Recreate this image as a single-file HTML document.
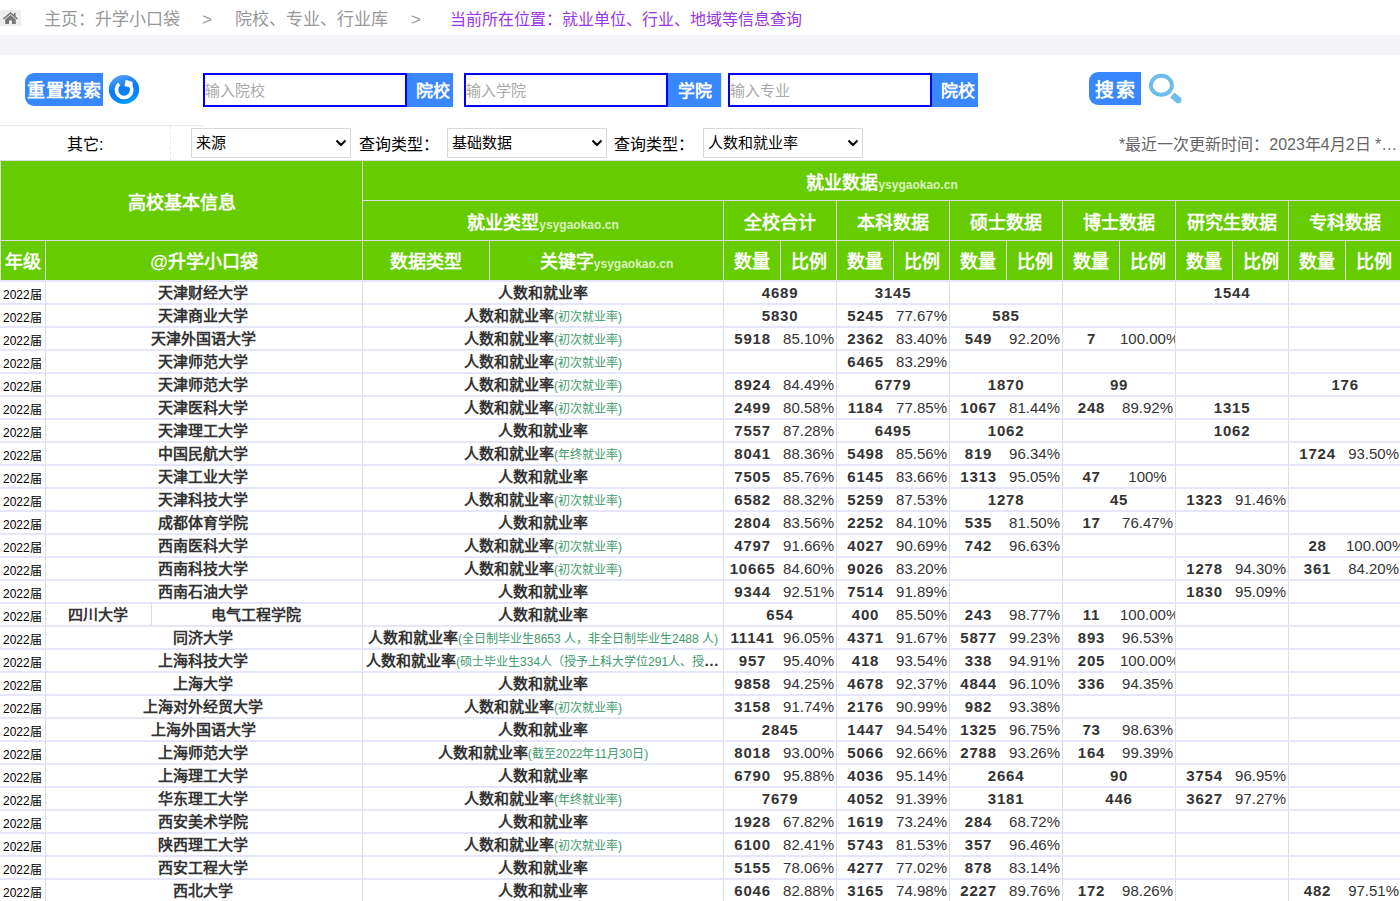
<!DOCTYPE html>
<html lang="zh-CN">
<head>
<meta charset="utf-8">
<title>就业单位、行业、地域等信息查询</title>
<style>
*{box-sizing:border-box;}
html,body{margin:0;padding:0;}
html{overflow:hidden;width:1400px;height:901px;}
body{width:1400px;height:901px;overflow:hidden;background:#fff;position:relative;
  font-family:"Liberation Sans",sans-serif;color:#333;}
.abs{position:absolute;}
/* breadcrumb */
.home{left:0;top:10px;width:21px;height:16px;background:#eee;}
.bc{top:7.5px;height:24px;line-height:24px;font-size:17px;color:#999;white-space:nowrap;}
.bc.cur{color:#9a36e8;font-size:16px;}
.band{left:0;top:35px;width:1400px;height:20px;background:#f4f4f8;}
/* search row */
.btn{background:#3987ff;color:#fff;font-weight:bold;text-align:center;white-space:nowrap;}
.inp{top:73px;height:34px;border:2px solid #0000f5;background:#fff;color:#a9a9a9;font-size:15px;line-height:32px;padding-left:0;white-space:nowrap;}
.ib{top:73px;height:34px;line-height:37px;font-size:17px;padding-left:6px;}
.sel{top:128px;height:30px;border:1px solid #d9d9d9;border-radius:0;background:#fff;font-size:15px;line-height:28px;color:#000;padding-left:4px;white-space:nowrap;}
.sel svg{position:absolute;right:3px;top:10px;}
.lab{top:129.5px;height:30px;line-height:30px;font-size:16px;color:#000;white-space:nowrap;}
/* table */
table{position:absolute;left:0;top:160px;width:1402px;border-collapse:separate;border-spacing:0;table-layout:fixed;
  border-top:1px solid #ddd;}
th{background:#66cc00;color:#fff;font-weight:bold;font-size:18px;text-align:center;padding:0;
  border-right:1px solid #ddd;border-bottom:1px solid #ddd;height:40px;white-space:nowrap;overflow:hidden;}
th small{font-size:12px;color:#d9f2bf;font-weight:bold;}
tr.h3 th{height:39px;border-bottom:0;padding-bottom:2px;}
th.f{border-left:1px solid #ddd;}
td{height:23px;padding:0;border-top:2px solid #e6e6fa;border-right:0;text-align:center;font-size:15px;
  white-space:nowrap;overflow:hidden;color:#333;line-height:14px;vertical-align:middle;}
td.yr{font-size:12px;color:#000;text-align:left;padding-left:3px;border-right:1px solid #dcdce6;padding-top:5px;}
td.nm{font-weight:bold;border-right:1px solid #dcdce6;padding-right:2px;}
td.ty{border-right:1px solid #dcdce6;font-weight:bold;}
td.ty div{overflow:hidden;text-overflow:ellipsis;white-space:nowrap;padding:0 3px;height:19px;line-height:19px;}
td.ty span{font-size:12px;font-weight:normal;color:#3c9a6b;}
td.n{font-weight:bold;letter-spacing:0.8px;}
td.p{font-weight:normal;}
td.e{border-right:1px solid #dcdce6;}
</style>
</head>
<body>
<!-- breadcrumb -->
<div class="abs home">
<svg width="21" height="16" viewBox="0 0 21 16"><path d="M10.5 2 L3 8.6 L4 9.6 L10.5 4 L17 9.6 L18 8.6 L15.6 6.4 V3 H13.8 V4.9 Z" fill="#777"/><path d="M5.2 9.4 L10.5 4.9 L15.8 9.4 V14 H12 V10.5 H9 V14 H5.2 Z" fill="#777"/></svg>
</div>
<div class="abs bc" style="left:44px;">主页：升学小口袋</div>
<div class="abs bc" style="left:202px;">&gt;</div>
<div class="abs bc" style="left:235px;">院校、专业、行业库</div>
<div class="abs bc" style="left:411px;">&gt;</div>
<div class="abs bc cur" style="left:450px;">当前所在位置：就业单位、行业、地域等信息查询</div>
<div class="abs band"></div>

<!-- search row -->
<div class="abs btn" style="left:25px;top:73px;width:78px;height:33px;line-height:36px;border-radius:9px 0 0 9px;font-family:'Liberation Serif',serif;font-size:18px;letter-spacing:0.5px;">重置搜索</div>
<svg class="abs" style="left:108px;top:74px;" width="32" height="32" viewBox="0 0 32 32">
  <defs><linearGradient id="g1" x1="0.25" y1="0" x2="0.6" y2="1"><stop offset="0" stop-color="#5aa2f2"/><stop offset="0.45" stop-color="#0b7bfb"/><stop offset="0.8" stop-color="#0586ff"/><stop offset="1" stop-color="#0aa6ff"/></linearGradient></defs>
  <ellipse cx="16" cy="15.5" rx="15.2" ry="14.6" fill="url(#g1)"/>
  <path d="M21.6 10.4 A7.7 7.7 0 1 1 11.2 9.9" fill="none" stroke="#fff" stroke-width="3.7"/>
  <path d="M17.9 6.3 L24.4 8.2 L24.2 10.8 L22.8 12.9 L16.9 12 Z" fill="#fff" stroke="#fff" stroke-width="0.7" stroke-linejoin="round"/>
</svg>
<div class="abs inp" style="left:203px;width:204px;">输入院校</div>
<div class="abs btn ib" style="left:407px;width:46px;">院校</div>
<div class="abs inp" style="left:464px;width:204px;">输入学院</div>
<div class="abs btn ib" style="left:668px;width:53px;padding-left:0;">学院</div>
<div class="abs" style="left:721px;top:73px;width:1px;height:34px;background:#e6e6fa;"></div>
<div class="abs inp" style="left:728px;width:204px;">输入专业</div>
<div class="abs btn ib" style="left:932px;width:46px;">院校</div>
<div class="abs btn" style="left:1089px;top:72px;width:52px;height:33px;line-height:37px;border-radius:9px 0 0 9px;font-family:'Liberation Serif',serif;font-size:19px;letter-spacing:2px;padding-left:2px;">搜索</div>
<svg class="abs" style="left:1146px;top:70px;" width="40" height="38" viewBox="0 0 40 38">
  <ellipse cx="15.4" cy="15.3" rx="10.5" ry="9.5" fill="none" stroke="#6cbdea" stroke-width="3.9"/>
  <path d="M26.4 25 L32.2 30" stroke="#6cbdea" stroke-width="6.6" stroke-linecap="butt"/>
  <circle cx="32.2" cy="30" r="3.3" fill="#6cbdea"/>
</svg>

<!-- filter row -->
<div class="abs" style="left:0;top:125px;width:203px;height:1px;background:#e8e8e8;"></div>
<div class="abs" style="left:170px;top:126px;width:0;height:34px;border-left:1px dashed #e6e6fa;"></div>
<div class="abs lab" style="left:67px;">其它:</div>
<div class="abs sel" style="left:191px;width:160px;">来源<svg width="12" height="8" viewBox="0 0 12 8"><path d="M1.5 1.5 L6 6 L10.5 1.5" fill="none" stroke="#000" stroke-width="2"/></svg></div>
<div class="abs lab" style="left:359px;">查询类型：</div>
<div class="abs sel" style="left:447px;width:160px;">基础数据<svg width="12" height="8" viewBox="0 0 12 8"><path d="M1.5 1.5 L6 6 L10.5 1.5" fill="none" stroke="#000" stroke-width="2"/></svg></div>
<div class="abs lab" style="left:614px;">查询类型：</div>
<div class="abs sel" style="left:703px;width:160px;">人数和就业率<svg width="12" height="8" viewBox="0 0 12 8"><path d="M1.5 1.5 L6 6 L10.5 1.5" fill="none" stroke="#000" stroke-width="2"/></svg></div>
<div class="abs lab" style="left:1119px;color:#666;">*最近一次更新时间：2023年4月2日 *…</div>

<!-- table -->
<table>
<colgroup>
<col style="width:46px"><col style="width:106px"><col style="width:211px"><col style="width:127px"><col style="width:234px">
<col style="width:57px"><col style="width:56px"><col style="width:57px"><col style="width:56px"><col style="width:57px"><col style="width:56px">
<col style="width:57px"><col style="width:56px"><col style="width:57px"><col style="width:56px"><col style="width:57px"><col style="width:56px">
</colgroup>
<thead>
<tr><th class="f" colspan="3" rowspan="2">高校基本信息</th><th colspan="14">就业数据<small>ysygaokao.cn</small></th></tr>
<tr><th colspan="2">就业类型<small>ysygaokao.cn</small></th><th colspan="2">全校合计</th><th colspan="2">本科数据</th><th colspan="2">硕士数据</th><th colspan="2">博士数据</th><th colspan="2">研究生数据</th><th colspan="2">专科数据</th></tr>
<tr class="h3"><th class="f">年级</th><th colspan="2">@升学小口袋</th><th>数据类型</th><th>关键字<small>ysygaokao.cn</small></th><th>数量</th><th>比例</th><th>数量</th><th>比例</th><th>数量</th><th>比例</th><th>数量</th><th>比例</th><th>数量</th><th>比例</th><th>数量</th><th>比例</th></tr>
</thead>
<tbody>
<tr><td class="yr">2022届</td><td class="nm" colspan="2">天津财经大学</td><td class="ty" colspan="2"><div>人数和就业率</div></td><td class="n e" colspan="2">4689</td><td class="n e" colspan="2">3145</td><td class="e" colspan="2"></td><td class="e" colspan="2"></td><td class="n e" colspan="2">1544</td><td class="e" colspan="2"></td></tr>
<tr><td class="yr">2022届</td><td class="nm" colspan="2">天津商业大学</td><td class="ty" colspan="2"><div>人数和就业率<span>(初次就业率)</span></div></td><td class="n e" colspan="2">5830</td><td class="n">5245</td><td class="p e">77.67%</td><td class="n e" colspan="2">585</td><td class="e" colspan="2"></td><td class="e" colspan="2"></td><td class="e" colspan="2"></td></tr>
<tr><td class="yr">2022届</td><td class="nm" colspan="2">天津外国语大学</td><td class="ty" colspan="2"><div>人数和就业率<span>(初次就业率)</span></div></td><td class="n">5918</td><td class="p e">85.10%</td><td class="n">2362</td><td class="p e">83.40%</td><td class="n">549</td><td class="p e">92.20%</td><td class="n">7</td><td class="p e">100.00%</td><td class="e" colspan="2"></td><td class="e" colspan="2"></td></tr>
<tr><td class="yr">2022届</td><td class="nm" colspan="2">天津师范大学</td><td class="ty" colspan="2"><div>人数和就业率<span>(初次就业率)</span></div></td><td class="e" colspan="2"></td><td class="n">6465</td><td class="p e">83.29%</td><td class="e" colspan="2"></td><td class="e" colspan="2"></td><td class="e" colspan="2"></td><td class="e" colspan="2"></td></tr>
<tr><td class="yr">2022届</td><td class="nm" colspan="2">天津师范大学</td><td class="ty" colspan="2"><div>人数和就业率<span>(初次就业率)</span></div></td><td class="n">8924</td><td class="p e">84.49%</td><td class="n e" colspan="2">6779</td><td class="n e" colspan="2">1870</td><td class="n e" colspan="2">99</td><td class="e" colspan="2"></td><td class="n e" colspan="2">176</td></tr>
<tr><td class="yr">2022届</td><td class="nm" colspan="2">天津医科大学</td><td class="ty" colspan="2"><div>人数和就业率<span>(初次就业率)</span></div></td><td class="n">2499</td><td class="p e">80.58%</td><td class="n">1184</td><td class="p e">77.85%</td><td class="n">1067</td><td class="p e">81.44%</td><td class="n">248</td><td class="p e">89.92%</td><td class="n e" colspan="2">1315</td><td class="e" colspan="2"></td></tr>
<tr><td class="yr">2022届</td><td class="nm" colspan="2">天津理工大学</td><td class="ty" colspan="2"><div>人数和就业率</div></td><td class="n">7557</td><td class="p e">87.28%</td><td class="n e" colspan="2">6495</td><td class="n e" colspan="2">1062</td><td class="e" colspan="2"></td><td class="n e" colspan="2">1062</td><td class="e" colspan="2"></td></tr>
<tr><td class="yr">2022届</td><td class="nm" colspan="2">中国民航大学</td><td class="ty" colspan="2"><div>人数和就业率<span>(年终就业率)</span></div></td><td class="n">8041</td><td class="p e">88.36%</td><td class="n">5498</td><td class="p e">85.56%</td><td class="n">819</td><td class="p e">96.34%</td><td class="e" colspan="2"></td><td class="e" colspan="2"></td><td class="n">1724</td><td class="p e">93.50%</td></tr>
<tr><td class="yr">2022届</td><td class="nm" colspan="2">天津工业大学</td><td class="ty" colspan="2"><div>人数和就业率</div></td><td class="n">7505</td><td class="p e">85.76%</td><td class="n">6145</td><td class="p e">83.66%</td><td class="n">1313</td><td class="p e">95.05%</td><td class="n">47</td><td class="p e">100%</td><td class="e" colspan="2"></td><td class="e" colspan="2"></td></tr>
<tr><td class="yr">2022届</td><td class="nm" colspan="2">天津科技大学</td><td class="ty" colspan="2"><div>人数和就业率<span>(初次就业率)</span></div></td><td class="n">6582</td><td class="p e">88.32%</td><td class="n">5259</td><td class="p e">87.53%</td><td class="n e" colspan="2">1278</td><td class="n e" colspan="2">45</td><td class="n">1323</td><td class="p e">91.46%</td><td class="e" colspan="2"></td></tr>
<tr><td class="yr">2022届</td><td class="nm" colspan="2">成都体育学院</td><td class="ty" colspan="2"><div>人数和就业率</div></td><td class="n">2804</td><td class="p e">83.56%</td><td class="n">2252</td><td class="p e">84.10%</td><td class="n">535</td><td class="p e">81.50%</td><td class="n">17</td><td class="p e">76.47%</td><td class="e" colspan="2"></td><td class="e" colspan="2"></td></tr>
<tr><td class="yr">2022届</td><td class="nm" colspan="2">西南医科大学</td><td class="ty" colspan="2"><div>人数和就业率<span>(初次就业率)</span></div></td><td class="n">4797</td><td class="p e">91.66%</td><td class="n">4027</td><td class="p e">90.69%</td><td class="n">742</td><td class="p e">96.63%</td><td class="e" colspan="2"></td><td class="e" colspan="2"></td><td class="n">28</td><td class="p e">100.00%</td></tr>
<tr><td class="yr">2022届</td><td class="nm" colspan="2">西南科技大学</td><td class="ty" colspan="2"><div>人数和就业率<span>(初次就业率)</span></div></td><td class="n">10665</td><td class="p e">84.60%</td><td class="n">9026</td><td class="p e">83.20%</td><td class="e" colspan="2"></td><td class="e" colspan="2"></td><td class="n">1278</td><td class="p e">94.30%</td><td class="n">361</td><td class="p e">84.20%</td></tr>
<tr><td class="yr">2022届</td><td class="nm" colspan="2">西南石油大学</td><td class="ty" colspan="2"><div>人数和就业率</div></td><td class="n">9344</td><td class="p e">92.51%</td><td class="n">7514</td><td class="p e">91.89%</td><td class="e" colspan="2"></td><td class="e" colspan="2"></td><td class="n">1830</td><td class="p e">95.09%</td><td class="e" colspan="2"></td></tr>
<tr><td class="yr">2022届</td><td class="nm sp">四川大学</td><td class="nm">电气工程学院</td><td class="ty" colspan="2"><div>人数和就业率</div></td><td class="n e" colspan="2">654</td><td class="n">400</td><td class="p e">85.50%</td><td class="n">243</td><td class="p e">98.77%</td><td class="n">11</td><td class="p e">100.00%</td><td class="e" colspan="2"></td><td class="e" colspan="2"></td></tr>
<tr><td class="yr">2022届</td><td class="nm" colspan="2">同济大学</td><td class="ty" colspan="2"><div>人数和就业率<span>(全日制毕业生8653 人，非全日制毕业生2488 人)</span></div></td><td class="n">11141</td><td class="p e">96.05%</td><td class="n">4371</td><td class="p e">91.67%</td><td class="n">5877</td><td class="p e">99.23%</td><td class="n">893</td><td class="p e">96.53%</td><td class="e" colspan="2"></td><td class="e" colspan="2"></td></tr>
<tr><td class="yr">2022届</td><td class="nm" colspan="2">上海科技大学</td><td class="ty" colspan="2"><div>人数和就业率<span>(硕士毕业生334人（授予上科大学位291人、授予中科院大学学位43人）)</span></div></td><td class="n">957</td><td class="p e">95.40%</td><td class="n">418</td><td class="p e">93.54%</td><td class="n">338</td><td class="p e">94.91%</td><td class="n">205</td><td class="p e">100.00%</td><td class="e" colspan="2"></td><td class="e" colspan="2"></td></tr>
<tr><td class="yr">2022届</td><td class="nm" colspan="2">上海大学</td><td class="ty" colspan="2"><div>人数和就业率</div></td><td class="n">9858</td><td class="p e">94.25%</td><td class="n">4678</td><td class="p e">92.37%</td><td class="n">4844</td><td class="p e">96.10%</td><td class="n">336</td><td class="p e">94.35%</td><td class="e" colspan="2"></td><td class="e" colspan="2"></td></tr>
<tr><td class="yr">2022届</td><td class="nm" colspan="2">上海对外经贸大学</td><td class="ty" colspan="2"><div>人数和就业率<span>(初次就业率)</span></div></td><td class="n">3158</td><td class="p e">91.74%</td><td class="n">2176</td><td class="p e">90.99%</td><td class="n">982</td><td class="p e">93.38%</td><td class="e" colspan="2"></td><td class="e" colspan="2"></td><td class="e" colspan="2"></td></tr>
<tr><td class="yr">2022届</td><td class="nm" colspan="2">上海外国语大学</td><td class="ty" colspan="2"><div>人数和就业率</div></td><td class="n e" colspan="2">2845</td><td class="n">1447</td><td class="p e">94.54%</td><td class="n">1325</td><td class="p e">96.75%</td><td class="n">73</td><td class="p e">98.63%</td><td class="e" colspan="2"></td><td class="e" colspan="2"></td></tr>
<tr><td class="yr">2022届</td><td class="nm" colspan="2">上海师范大学</td><td class="ty" colspan="2"><div>人数和就业率<span>(截至2022年11月30日)</span></div></td><td class="n">8018</td><td class="p e">93.00%</td><td class="n">5066</td><td class="p e">92.66%</td><td class="n">2788</td><td class="p e">93.26%</td><td class="n">164</td><td class="p e">99.39%</td><td class="e" colspan="2"></td><td class="e" colspan="2"></td></tr>
<tr><td class="yr">2022届</td><td class="nm" colspan="2">上海理工大学</td><td class="ty" colspan="2"><div>人数和就业率</div></td><td class="n">6790</td><td class="p e">95.88%</td><td class="n">4036</td><td class="p e">95.14%</td><td class="n e" colspan="2">2664</td><td class="n e" colspan="2">90</td><td class="n">3754</td><td class="p e">96.95%</td><td class="e" colspan="2"></td></tr>
<tr><td class="yr">2022届</td><td class="nm" colspan="2">华东理工大学</td><td class="ty" colspan="2"><div>人数和就业率<span>(年终就业率)</span></div></td><td class="n e" colspan="2">7679</td><td class="n">4052</td><td class="p e">91.39%</td><td class="n e" colspan="2">3181</td><td class="n e" colspan="2">446</td><td class="n">3627</td><td class="p e">97.27%</td><td class="e" colspan="2"></td></tr>
<tr><td class="yr">2022届</td><td class="nm" colspan="2">西安美术学院</td><td class="ty" colspan="2"><div>人数和就业率</div></td><td class="n">1928</td><td class="p e">67.82%</td><td class="n">1619</td><td class="p e">73.24%</td><td class="n">284</td><td class="p e">68.72%</td><td class="e" colspan="2"></td><td class="e" colspan="2"></td><td class="e" colspan="2"></td></tr>
<tr><td class="yr">2022届</td><td class="nm" colspan="2">陕西理工大学</td><td class="ty" colspan="2"><div>人数和就业率<span>(初次就业率)</span></div></td><td class="n">6100</td><td class="p e">82.41%</td><td class="n">5743</td><td class="p e">81.53%</td><td class="n">357</td><td class="p e">96.46%</td><td class="e" colspan="2"></td><td class="e" colspan="2"></td><td class="e" colspan="2"></td></tr>
<tr><td class="yr">2022届</td><td class="nm" colspan="2">西安工程大学</td><td class="ty" colspan="2"><div>人数和就业率</div></td><td class="n">5155</td><td class="p e">78.06%</td><td class="n">4277</td><td class="p e">77.02%</td><td class="n">878</td><td class="p e">83.14%</td><td class="e" colspan="2"></td><td class="e" colspan="2"></td><td class="e" colspan="2"></td></tr>
<tr><td class="yr">2022届</td><td class="nm" colspan="2">西北大学</td><td class="ty" colspan="2"><div>人数和就业率</div></td><td class="n">6046</td><td class="p e">82.88%</td><td class="n">3165</td><td class="p e">74.98%</td><td class="n">2227</td><td class="p e">89.76%</td><td class="n">172</td><td class="p e">98.26%</td><td class="e" colspan="2"></td><td class="n">482</td><td class="p e">97.51%</td></tr>
</tbody>
</table>
</body>
</html>
